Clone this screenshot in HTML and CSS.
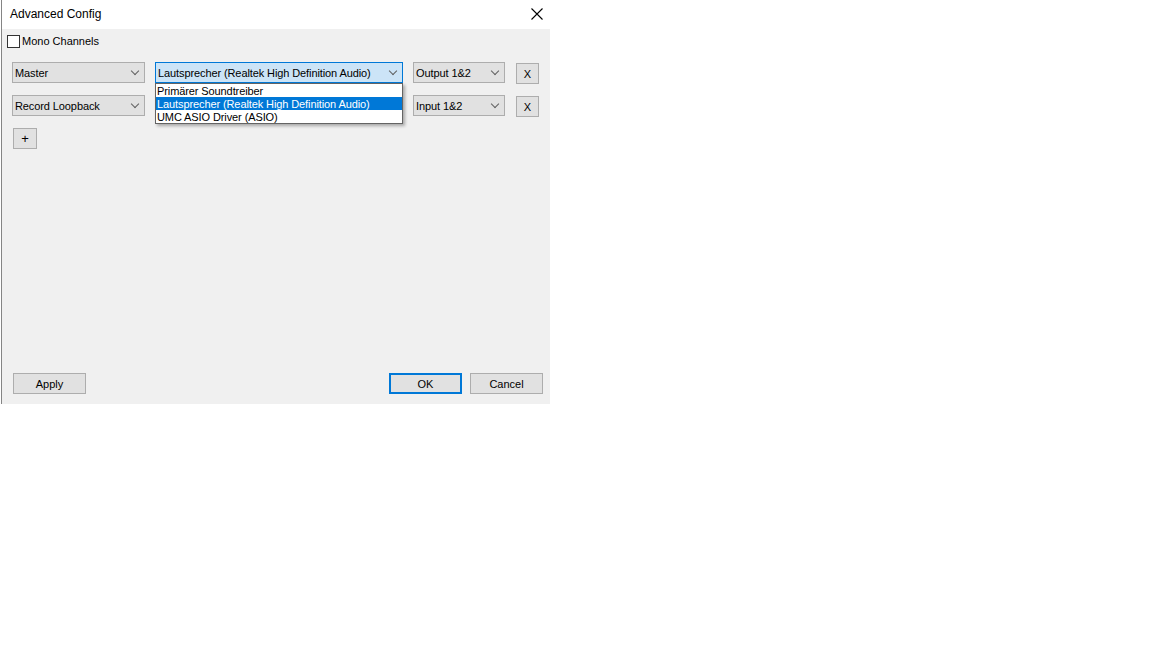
FILE: index.html
```html
<!DOCTYPE html>
<html lang="de">
<head>
    <meta charset="UTF-8">
    <title>Advanced Config</title>
    <link rel="stylesheet" href="styles.css">
</head>
<body>
    <div class="window">
        <div class="title-bar">
            <span class="title">Advanced Config</span>
            <svg class="close-icon" width="12" height="12" viewBox="0 0 12 12">
                <path d="M0.5 0.5 L11.5 11.5 M11.5 0.5 L0.5 11.5" stroke="#000" stroke-width="1.1" fill="none"/>
            </svg>
        </div>

        <div class="client">
            <label class="check-row">
                <span class="check-box"></span>
                <span>Mono Channels</span>
            </label>

            <div class="channel-list">
                <div class="channel-row">
                    <div class="combo combo-name"><span>Master</span><i class="chevron"></i></div>
                    <div class="combo-wrap">
                        <div class="combo combo-device focused"><span>Lautsprecher (Realtek High Definition Audio)</span><i class="chevron"></i></div>
                        <ul class="dropdown">
                            <li>Primärer Soundtreiber</li>
                            <li class="selected">Lautsprecher (Realtek High Definition Audio)</li>
                            <li>UMC ASIO Driver (ASIO)</li>
                        </ul>
                    </div>
                    <div class="combo combo-port"><span>Output 1&amp;2</span><i class="chevron"></i></div>
                    <button class="btn btn-remove">X</button>
                </div>

                <div class="channel-row">
                    <div class="combo combo-name"><span>Record Loopback</span><i class="chevron"></i></div>
                    <div class="combo combo-device"><span></span><i class="chevron"></i></div>
                    <div class="combo combo-port"><span>Input 1&amp;2</span><i class="chevron"></i></div>
                    <button class="btn btn-remove">X</button>
                </div>
            </div>

            <button class="btn btn-add">+</button>

            <div class="spacer"></div>

            <div class="footer">
                <button class="btn btn-wide">Apply</button>
                <div class="footer-right">
                    <button class="btn btn-wide default">OK</button>
                    <button class="btn btn-wide">Cancel</button>
                </div>
            </div>
        </div>
    </div>
</body>
</html>
```

FILE: styles.css
```css
* {
    box-sizing: border-box;
    margin: 0;
    padding: 0;
}

body {
    font-family: 'Liberation Sans', Arial, sans-serif;
    font-size: 11px;
    background: #fff;
    color: #000;
}

.window {
    width: 549px;
    height: 404px;
    margin-left: 1px;
    border-left: 1px solid #858585;
    display: flex;
    flex-direction: column;
}

.title-bar {
    height: 29px;
    background: #fff;
    display: flex;
    align-items: center;
    justify-content: space-between;
    padding: 0 7px 1px 8px;
}

.title {
    font-size: 12px;
}

.client {
    flex: 1;
    background: #f0f0f0;
    display: flex;
    flex-direction: column;
    padding: 6px 7px 10px 5px;
}

.check-row {
    display: flex;
    align-items: center;
    gap: 2px;
    height: 13px;
    line-height: 13px;
}

.check-box {
    width: 13px;
    height: 13px;
    border: 1px solid #333;
    background: #fff;
}

.channel-list {
    display: flex;
    flex-direction: column;
    gap: 11px;
    margin: 14px 0 0 5px;
}

.channel-row {
    display: flex;
    align-items: flex-start;
    gap: 10px;
}

.combo {
    height: 21px;
    background: #e1e1e1;
    border: 1px solid #adadad;
    display: flex;
    align-items: center;
    justify-content: space-between;
    padding: 0 4px 0 2px;
    white-space: nowrap;
    letter-spacing: -0.1px;
}

.combo-name {
    width: 133px;
}

.combo-device {
    width: 248px;
}

.combo-port {
    width: 92px;
}

.combo.focused {
    background: #cce4f7;
    border-color: #0078d7;
}

.chevron {
    width: 6px;
    height: 6px;
    border-right: 1px solid #606060;
    border-bottom: 1px solid #606060;
    transform: rotate(45deg);
    margin: -4px 2px 0 0;
}

.combo-wrap {
    position: relative;
}

.dropdown {
    position: absolute;
    top: 21px;
    left: 0;
    width: 248px;
    list-style: none;
    background: #fff;
    border: 1px solid #646464;
    box-shadow: 2px 2px 3px rgba(0, 0, 0, 0.3);
    z-index: 2;
    letter-spacing: -0.1px;
}

.dropdown li {
    height: 13px;
    line-height: 14px;
    padding-left: 1px;
    white-space: nowrap;
}

.dropdown li.selected {
    background: #0078d7;
    color: #fff;
}

.btn {
    font-family: inherit;
    font-size: 11px;
    height: 21px;
    background: #e1e1e1;
    border: 1px solid #adadad;
    color: #000;
}

.btn-remove {
    width: 23px;
    margin-left: 1px;
    margin-top: 1px;
}

.btn-add {
    width: 24px;
    margin: 11px 0 0 6px;
    font-size: 13px;
}

.spacer {
    flex: 1;
}

.footer {
    display: flex;
    justify-content: space-between;
    padding-left: 6px;
}

.footer-right {
    display: flex;
    gap: 8px;
}

.btn-wide {
    width: 73px;
}

.btn.default {
    border: 2px solid #0078d7;
}
```
